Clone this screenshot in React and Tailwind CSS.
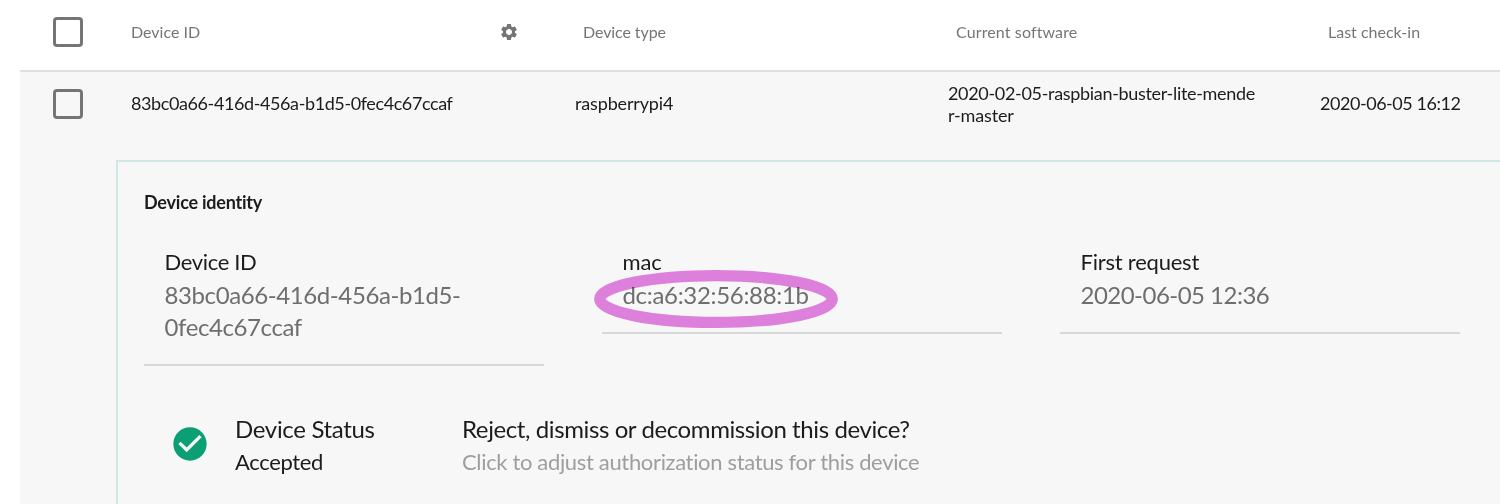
import React from "react";
import { MdSettings, MdCheckCircle } from "react-icons/md";

function Checkbox() {
  return <span className="block size-[30px] rounded-[4px] border-[3px] border-[#757575]" />;
}

function Field({ label, children }) {
  return (
    <div className="w-[400px] border-b-2 border-[#d8d8d8] px-[20.5px] pb-[21px] text-[22px] leading-[32px]">
      <div className="mb-[1px] text-[#1c1c1c]">{label}</div>
      <div className="text-[24px] text-[#6e6e6e]">{children}</div>
    </div>
  );
}

export default function App() {
  return (
    <div className="h-[504px] w-[1500px] overflow-hidden bg-white pl-[20px] font-[Lato,sans-serif] text-[#1c1c1c] [font-variant-ligatures:none]">
      <header className="grid h-[72px] grid-cols-[111px_444px_373px_372px_180px] items-start border-b-2 border-[#e0e0e0] pt-[17px] text-[16px] leading-[30px] text-[#757575]">
        <div className="pl-[33px]"><Checkbox /></div>
        <div className="flex items-center justify-between pr-[56px]"><span>Device ID</span><MdSettings size={20} /></div>
        <div className="pl-[8px] tracking-[-0.09px]">Device type</div>
        <div className="pl-[8px] tracking-[0.12px]">Current software</div>
        <div className="pl-[8px]">Last check-in</div>
      </header>
      <main className="h-[432px] bg-[#f7f7f7]">
        <div className="grid h-[88px] grid-cols-[111px_444px_373px_372px_180px] items-center pb-[24px] text-[18px] leading-[22px]">
          <div className="pl-[33px]"><Checkbox /></div>
          <div className="pb-[2px] tracking-[-0.4px]">83bc0a66-416d-456a-b1d5-0fec4c67ccaf</div>
          <div className="pb-[2px] tracking-[-0.15px]">raspberrypi4</div>
          <div><span className="tracking-[-0.32px]">2020-02-05-raspbian-buster-lite-mende</span><br /><span className="tracking-[-0.15px]">r-master</span></div>
          <div className="pb-[2px] tracking-[-0.46px]">2020-06-05 16:12</div>
        </div>
        <section className="ml-[96px] h-[360px] border-l-2 border-t-2 border-[#d0e8e5] pl-[26px] pt-[28px]">
          <h2 className="text-[18px] leading-[24px] font-bold tracking-[-0.22px]">Device identity</h2>
          <div className="mt-[32px] flex items-start gap-[58px]">
            <Field label={<span className="tracking-[-0.35px]">Device ID</span>}>
              <span className="tracking-[-0.4px]">83bc0a66-416d-456a-b1d5-<br />0fec4c67ccaf</span>
            </Field>
            <Field label={<span className="tracking-[-0.2px]">mac</span>}>
              <span className="relative tracking-[-0.32px]">
                dc:a6:32:56:88:1b
                <svg className="absolute -left-[29.5px] -top-[11px] mix-blend-multiply" width="246" height="60" viewBox="0 0 246 60" fill="none">
                  <ellipse cx="123" cy="30" rx="116.2" ry="23.4" stroke="#e484e3" strokeWidth="11.4" />
                </svg>
              </span>
            </Field>
            <Field label={<span className="tracking-[-0.22px]">First request</span>}>
              <span className="tracking-[-0.52px]">2020-06-05 12:36</span>
            </Field>
          </div>
          <div className="mt-[46px] flex leading-[33px]">
            <MdCheckCircle className="ml-[26px] mt-[12px] text-[#0a9f74]" size={40} />
            <div className="ml-[25px] w-[227px] text-[22px]">
              <div className="text-[24px] tracking-[-0.33px]">Device Status</div>
              <div className="tracking-[-0.35px]">Accepted</div>
            </div>
            <div className="text-[22px]">
              <div className="text-[24px] tracking-[-0.4px]">Reject, dismiss or decommission this device?</div>
              <div className="tracking-[-0.34px] text-[#9e9e9e]">Click to adjust authorization status for this device</div>
            </div>
          </div>
        </section>
      </main>
    </div>
  );
}
